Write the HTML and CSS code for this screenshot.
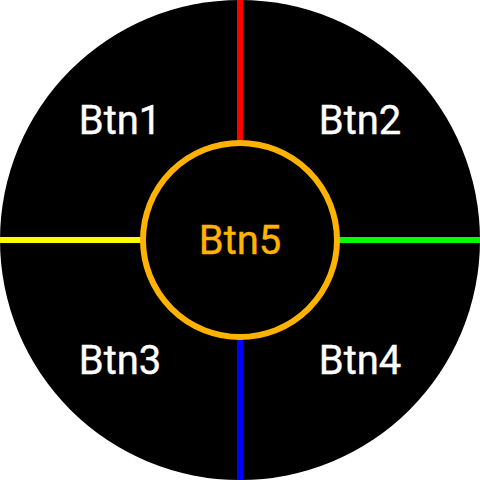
FILE: index.html
```html
<!DOCTYPE html>
<html lang="en">
<head>
  <meta charset="UTF-8" />
  <meta name="viewport" content="width=device-width, initial-scale=1.0" />
  <title>Round Pad</title>
  <link rel="stylesheet" href="styles.css">
</head>
<body>

  <div class="pad">
    <div class="quad">Btn1</div>
    <div class="quad">Btn2</div>
    <div class="quad">Btn3</div>
    <div class="quad">Btn4</div>

    <span class="divider top"></span>
    <span class="divider right"></span>
    <span class="divider bottom"></span>
    <span class="divider left"></span>

    <div class="center">Btn5</div>
  </div>

</body>
</html>
```

FILE: styles.css
```css
* {
  margin: 0;
  padding: 0;
  box-sizing: border-box;
}

body {
  width: 480px;
  height: 480px;
  background: #fff;
  font-family: Roboto, 'Noto Sans', sans-serif;
}

.pad {
  position: relative;
  width: 480px;
  height: 480px;
  border-radius: 50%;
  background: #000;
  overflow: hidden;
  display: grid;
  grid-template-columns: 1fr 1fr;
  grid-template-rows: 1fr 1fr;
}

.quad {
  display: flex;
  justify-content: center;
  align-items: center;
  color: #fff;
  font-size: 40px;
  -webkit-text-stroke: 0.4px #fff;
}

/* coloured separators between the buttons */
.divider {
  position: absolute;
}

.divider.top,
.divider.bottom {
  left: 237px;
  width: 6px;
  height: 142px;
}

.divider.left,
.divider.right {
  top: 237px;
  height: 6px;
  width: 142px;
}

.divider.top { top: 0; background: #ff0000; }
.divider.bottom { bottom: 0; background: #0000ff; }
.divider.left { left: 0; background: #ffff00; }
.divider.right { right: 0; background: #00ff00; }

.center {
  position: absolute;
  top: 140px;
  left: 140px;
  width: 200px;
  height: 200px;
  border: 6px solid #ffb300;
  border-radius: 50%;
  background: #000;
  color: #ffb300;
  font-size: 40px;
  -webkit-text-stroke: 0.4px #ffb300;
  display: flex;
  justify-content: center;
  align-items: center;
}
```
